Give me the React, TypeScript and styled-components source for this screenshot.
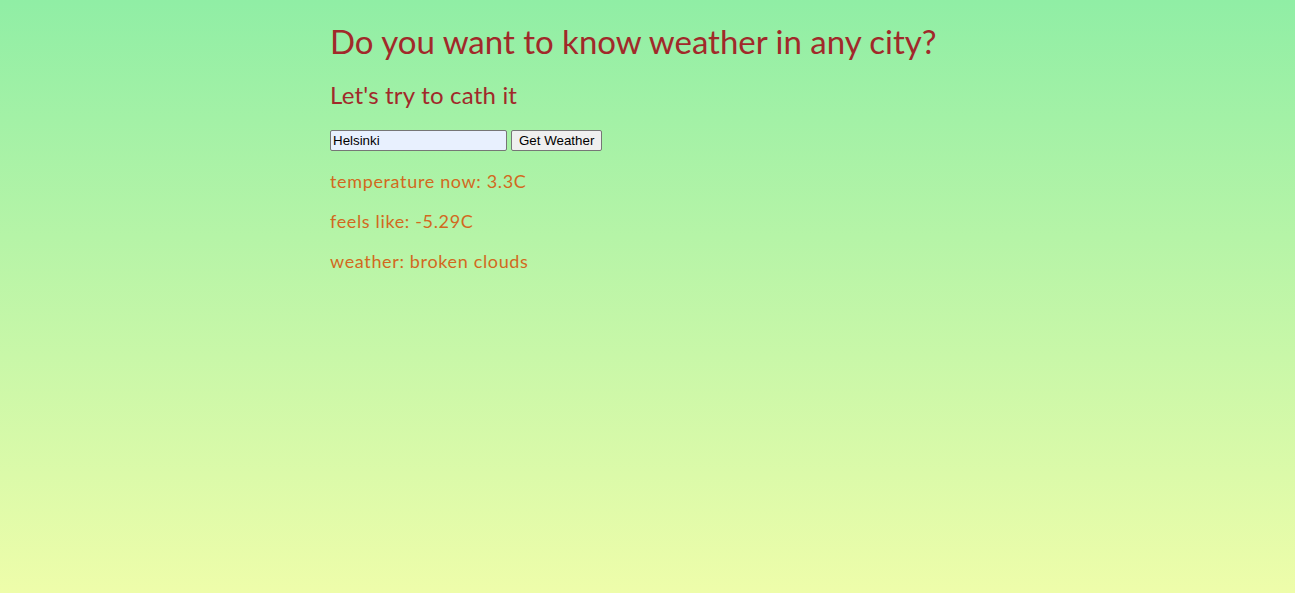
import { useState } from 'react';
import styled, { createGlobalStyle } from 'styled-components';

const GlobalStyle = createGlobalStyle`
  html, body {
    margin: 0;
    min-height: 100%;
  }
  body {
    font-family: Lato, "Open Sans", sans-serif;
    background: linear-gradient(to bottom, #90eea5 0%, #eefdaa 100%);
    background-attachment: fixed;
    min-height: 593px;
  }
`;

const Page = styled.div`
  width: 635px;
  margin: 0 auto;
  padding-top: 1px;
`;

const Title = styled.h1`
  color: #a1292a;
  font-size: 33px;
  font-weight: 400;
  margin: 20px 0 0;
`;

const Subtitle = styled.h2`
  color: #a1292a;
  font-size: 24px;
  font-weight: 400;
  letter-spacing: 0.2px;
  margin: 19px 0 0;
`;

const Form = styled.form`
  display: flex;
  gap: 4px;
  margin-top: 21px;
  align-items: center;
`;

const CityInput = styled.input`
  width: 177px;
  height: 21px;
  box-sizing: border-box;
  padding: 1px 2px;
  border: 1px solid #767676;
  border-radius: 2px;
  background: #e8f0fe;
  font-family: Arial, "Liberation Sans", sans-serif;
  font-size: 13.33px;
  color: #000;
`;

const Button = styled.button`
  height: 21px;
  padding: 1px 7px;
  border: 1px solid #767676;
  border-radius: 2px;
  background: #efefef;
  font-family: Arial, "Liberation Sans", sans-serif;
  font-size: 13.33px;
  color: #000;
`;

const Info = styled.p`
  color: #d2691e;
  font-size: 18px;
  letter-spacing: 0.65px;
  margin: 0;
  line-height: 22px;
  & + & {
    margin-top: 18px;
  }
  &:first-of-type {
    margin-top: 19px;
  }
`;

export default function App() {
  const [city, setCity] = useState('Helsinki');

  return (
    <>
      <GlobalStyle />
      <Page>
        <Title>Do you want to know weather in any city?</Title>
        <Subtitle>Let's try to cath it</Subtitle>
        <Form onSubmit={e => e.preventDefault()}>
          <CityInput value={city} onChange={e => setCity(e.target.value)} />
          <Button type="submit">Get Weather</Button>
        </Form>
        <div>
          <Info>temperature now: 3.3C</Info>
          <Info>feels like: -5.29C</Info>
          <Info>weather: broken clouds</Info>
        </div>
      </Page>
    </>
  );
}
